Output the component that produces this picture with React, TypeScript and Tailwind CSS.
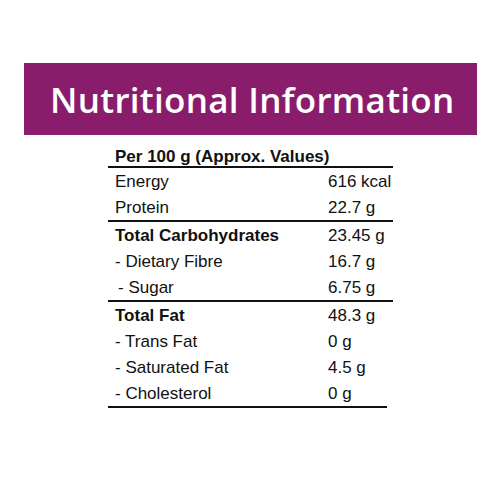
const GROUPS: { label: string; value: string; bold?: boolean; indent?: boolean }[][] = [
  [
    { label: "Energy", value: "616 kcal" },
    { label: "Protein", value: "22.7 g" },
  ],
  [
    { label: "Total Carbohydrates", value: "23.45 g", bold: true },
    { label: "- Dietary Fibre", value: "16.7 g" },
    { label: "- Sugar", value: "6.75 g", indent: true },
  ],
  [
    { label: "Total Fat", value: "48.3 g", bold: true },
    { label: "- Trans Fat", value: "0 g" },
    { label: "- Saturated Fat", value: "4.5 g" },
    { label: "- Cholesterol", value: "0 g" },
  ],
];

export default function App() {
  return (
    <div className="w-[500px] h-[500px] bg-white overflow-hidden">
      {/* Banner */}
      <div className="mt-[63px] ml-[24px] w-[453px] h-[72px] bg-[#8a1d6b] flex items-center pl-[26px]">
        <span className="font-['Open_Sans',sans-serif] font-semibold text-white text-[35px] tracking-[0.3px] leading-none">
          Nutritional Information
        </span>
      </div>

      {/* Table */}
      <div className="mt-[13px] ml-[108px] w-[285px] font-['Liberation_Sans',Arial,sans-serif] text-[#111]">
        <div className="pl-[7px] pb-[1px] text-[17px] leading-[17px] font-bold border-b-2 border-[#111]">
          Per 100 g (Approx. Values)
        </div>
        {GROUPS.map((rows, gi) => (
          <div
            key={gi}
            className={gi < GROUPS.length - 1 ? "border-b-2 border-[#111]" : ""}
          >
            {rows.map((r) => (
              <div key={r.label} className="grid grid-cols-[220px_1fr] h-[26px] text-[17px] leading-[27px]">
                <span className={`${r.indent ? "pl-[10px]" : "pl-[7px]"} ${r.bold ? "font-bold" : ""}`}>
                  {r.label}
                </span>
                <span>{r.value}</span>
              </div>
            ))}
          </div>
        ))}
        <div className="w-[279px] h-[2px] bg-[#111]" />
      </div>
    </div>
  );
}
